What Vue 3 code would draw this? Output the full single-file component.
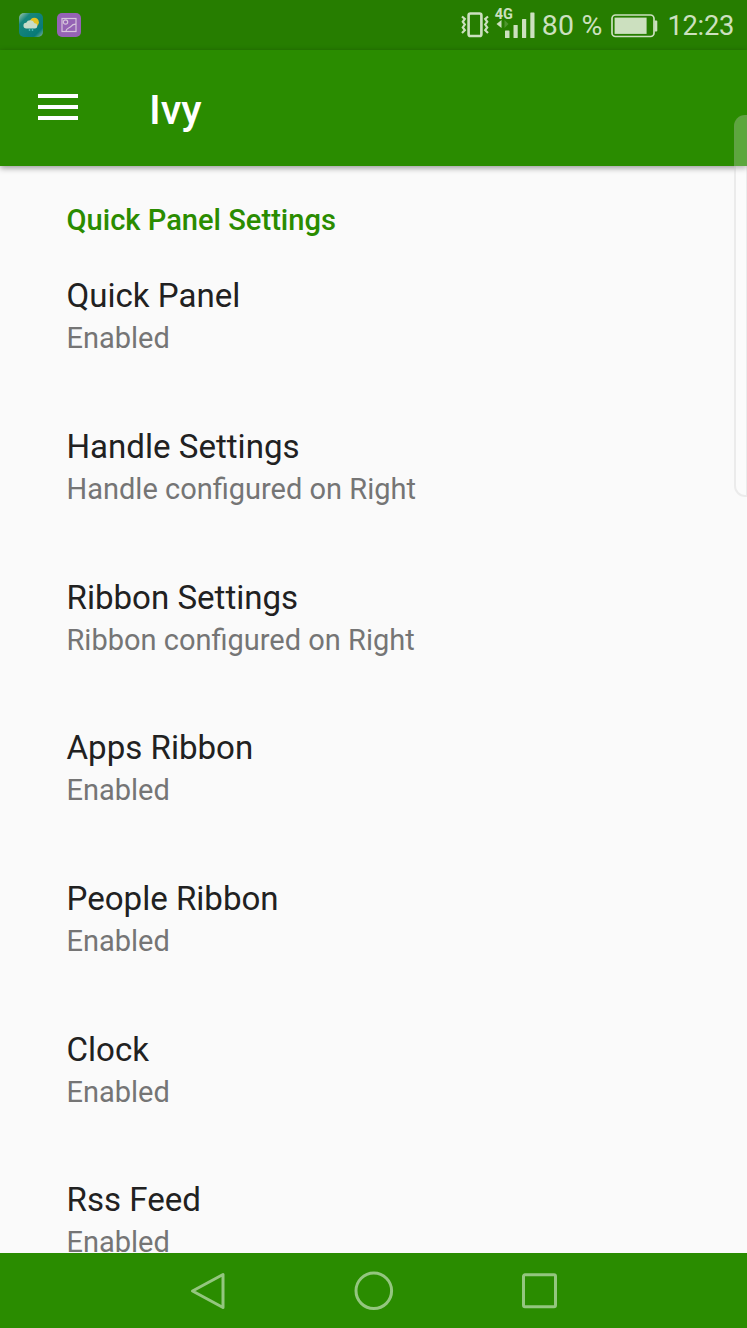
<script setup>
import { ref } from 'vue'

const title = ref('Ivy')
const battery = ref(80)
const time = ref('12:23')

const items = ref([
  { name: 'Quick Panel', summary: 'Enabled' },
  { name: 'Handle Settings', summary: 'Handle configured on Right' },
  { name: 'Ribbon Settings', summary: 'Ribbon configured on Right' },
  { name: 'Apps Ribbon', summary: 'Enabled' },
  { name: 'People Ribbon', summary: 'Enabled' },
  { name: 'Clock', summary: 'Enabled' },
  { name: 'Rss Feed', summary: 'Enabled' },
])
</script>

<template>
  <div class="screen">
    <header class="status-bar">
      <div class="status-bar__notifications">
        <svg class="status-bar__app" viewBox="0 0 24 24">
          <defs>
            <linearGradient id="sky" x1="0" y1="0" x2="1" y2="1">
              <stop offset="0" stop-color="#a5c9b0" />
              <stop offset="0.25" stop-color="#17877d" />
              <stop offset="0.8" stop-color="#087a78" />
              <stop offset="1" stop-color="#8ab8a0" />
            </linearGradient>
          </defs>
          <rect width="24" height="24" rx="5" fill="url(#sky)" />
          <circle cx="15.300" cy="9.300" r="4.600" fill="#e3c322" />
          <path d="M7.500 15.500a2.900 2.900 0 0 1-.3-5.800 4.600 4.600 0 0 1 8.300.6 2.600 2.600 0 0 1 .3 5.200z" fill="#c8dcc9" />
          <path d="M10.500 16v2M13.500 15.500v2.500" stroke="#4ab3b5" stroke-width="1.400" />
        </svg>
        <svg class="status-bar__app" viewBox="0 0 24 24">
          <rect width="24" height="24" rx="5" fill="#9563b5" />
          <g fill="none" stroke="#d5c4db" stroke-width="1.200">
            <rect x="5" y="5.500" width="14" height="13" />
            <circle cx="8.500" cy="9" r="2.200" />
            <path d="M8.800 18.500c.7-4.200 4-3.200 5.300-5.200s2.900-2.200 4.900-2.200" />
          </g>
        </svg>
      </div>
      <div class="status-bar__system">
        <svg class="status-bar__vibrate" viewBox="0 0 28 26">
          <g fill="none" stroke="#cce0bf">
            <rect x="7.600" y="1.500" width="12.800" height="22.500" rx="1.800" stroke-width="2.600" />
            <path d="M1 4.500l2.800 2.500-2 2.800 2 2.800-2 2.800 2 2.800L1 21M27 4.500L24.200 7l2 2.800-2 2.800 2 2.800-2 2.800 2.800 2.800" stroke-width="2.200" />
          </g>
        </svg>
        <div class="network">
          <span class="network__type">4G</span>
          <svg class="network__bars" viewBox="0 0 42 32">
            <g fill="#cce0bf">
              <path d="M1.500 16l5-4v8z" />
              <path d="M9.500 12l4 4-4 4z" opacity="0.25" />
              <rect x="10" y="22.500" width="4.500" height="7.500" rx="0.600" />
              <rect x="18.500" y="17" width="4.200" height="13" rx="0.600" />
              <rect x="27" y="11" width="4.200" height="19" rx="0.600" />
              <rect x="35.300" y="4.500" width="4.200" height="25.500" rx="0.600" />
            </g>
          </svg>
        </div>
        <span class="status-bar__percent">{{ battery }} %</span>
        <svg class="status-bar__battery" viewBox="0 0 47 24">
          <rect x="1" y="1" width="42" height="21.500" rx="3.500" fill="none" stroke="#cce0bf" stroke-width="1.700" />
          <rect x="3.600" y="3.600" :width="battery * 0.4" height="16.300" fill="#cce0bf" />
          <path d="M43.500 6.500h1.800a1 1 0 0 1 1 1v9a1 1 0 0 1-1 1h-1.800z" fill="#cce0bf" />
        </svg>
        <span class="status-bar__time">{{ time }}</span>
      </div>
    </header>

    <div class="app-bar">
      <button class="app-bar__menu">
        <span></span>
        <span></span>
        <span></span>
      </button>
      <h1 class="app-bar__title">{{ title }}</h1>
    </div>

    <main class="settings">
      <h2 class="settings__heading">Quick Panel Settings</h2>
      <div v-for="item in items" :key="item.name" class="settings__item">
        <div class="settings__name">{{ item.name }}</div>
        <div class="settings__summary">{{ item.summary }}</div>
      </div>
    </main>

    <nav class="nav-bar">
      <svg class="nav-bar__icon" viewBox="0 0 40 40">
        <path d="M35 3.500V36.500L4.500 20z" />
      </svg>
      <svg class="nav-bar__icon" viewBox="0 0 40 40">
        <circle cx="19.800" cy="19.800" r="17.800" />
      </svg>
      <svg class="nav-bar__icon" viewBox="0 0 40 40">
        <rect x="3.500" y="3.800" width="32" height="32" rx="1.500" />
      </svg>
    </nav>

    <!-- edge handle, floats over the bar and the list -->
    <div class="handle"></div>
  </div>
</template>

<style>
body {
  margin: 0;
  overflow: hidden;
}
</style>

<style scoped>
.screen {
  position: relative;
  display: flex;
  flex-direction: column;
  width: 747px;
  height: 1328px;
  overflow: hidden;
  background: #fafafa;
  font-family: Roboto, "Liberation Sans", sans-serif;
}

.status-bar {
  display: flex;
  flex: none;
  justify-content: space-between;
  box-sizing: border-box;
  height: 50px;
  padding: 0 13px 0 19px;
  background: #267d00;
  color: #cce0bf;
  font-size: 28.500px;
  line-height: 52px;
  white-space: nowrap;
  z-index: 1;
}

.status-bar__notifications {
  display: flex;
  align-items: center;
  gap: 14px;
}

.status-bar__app {
  width: 24px;
  height: 24px;
}

.status-bar__system {
  display: flex;
  align-items: flex-start;
}

.status-bar__vibrate {
  width: 28px;
  height: 26px;
  margin: 12px 6px 0 0;
}

.network {
  position: relative;
  width: 42px;
  height: 32px;
  margin: 8px 5px 0 0;
}

.network__type {
  position: absolute;
  top: 0;
  left: 0;
  font-size: 14.500px;
  font-weight: 700;
  line-height: 13px;
}

.network__bars {
  display: block;
  width: 42px;
  height: 32px;
}

.status-bar__percent {
  letter-spacing: 0.2px;
}

.status-bar__battery {
  width: 47px;
  height: 24px;
  margin: 14px 10px 0 8px;
}

.status-bar__time {
  font-size: 27.300px;
  letter-spacing: -0.3px;
}

.app-bar {
  display: flex;
  flex: none;
  align-items: center;
  height: 116px;
  padding-left: 38px;
  background: #2a8c00;
  box-shadow: 0 2px 6px rgba(0, 0, 0, 0.4);
  z-index: 1;
}

.app-bar__menu {
  display: flex;
  flex-direction: column;
  gap: 7px;
  width: 40px;
  margin-bottom: 2px;
  padding: 0;
  border: none;
  background: none;
}

.app-bar__menu span {
  height: 4px;
  background: #fff;
}

.app-bar__title {
  margin: 3px 0 0 71px;
  color: #fff;
  font-size: 41.500px;
  font-weight: 500;
  line-height: 48px;
}

.settings {
  flex: 1;
  min-height: 0;
  overflow: hidden;
  padding: 34.400px 66.500px 0;
}

.settings__heading {
  margin: 0 0 34.900px;
  color: #2a8c00;
  font-size: 29.100px;
  font-weight: 500;
  line-height: 40px;
}

.settings__item {
  height: 150.700px;
}

.settings__name {
  color: #212121;
  font-size: 33.100px;
  line-height: 42px;
}

.settings__summary {
  color: #757575;
  font-size: 29px;
  line-height: 42px;
}

.nav-bar {
  display: flex;
  flex: none;
  justify-content: center;
  align-items: center;
  gap: 126px;
  height: 75px;
  background: #2a8c00;
}

.nav-bar__icon {
  width: 40px;
  height: 40px;
  fill: none;
  stroke: #94c67f;
  stroke-width: 3;
  stroke-linejoin: round;
}

.handle {
  position: absolute;
  top: 115px;
  right: 0;
  box-sizing: border-box;
  width: 13px;
  height: 382px;
  border: 2px solid rgba(120, 120, 120, 0.12);
  border-right-width: 1px;
  border-radius: 11px 0 0 11px;
  background: rgba(255, 255, 255, 0.24);
  z-index: 2;
}
</style>
